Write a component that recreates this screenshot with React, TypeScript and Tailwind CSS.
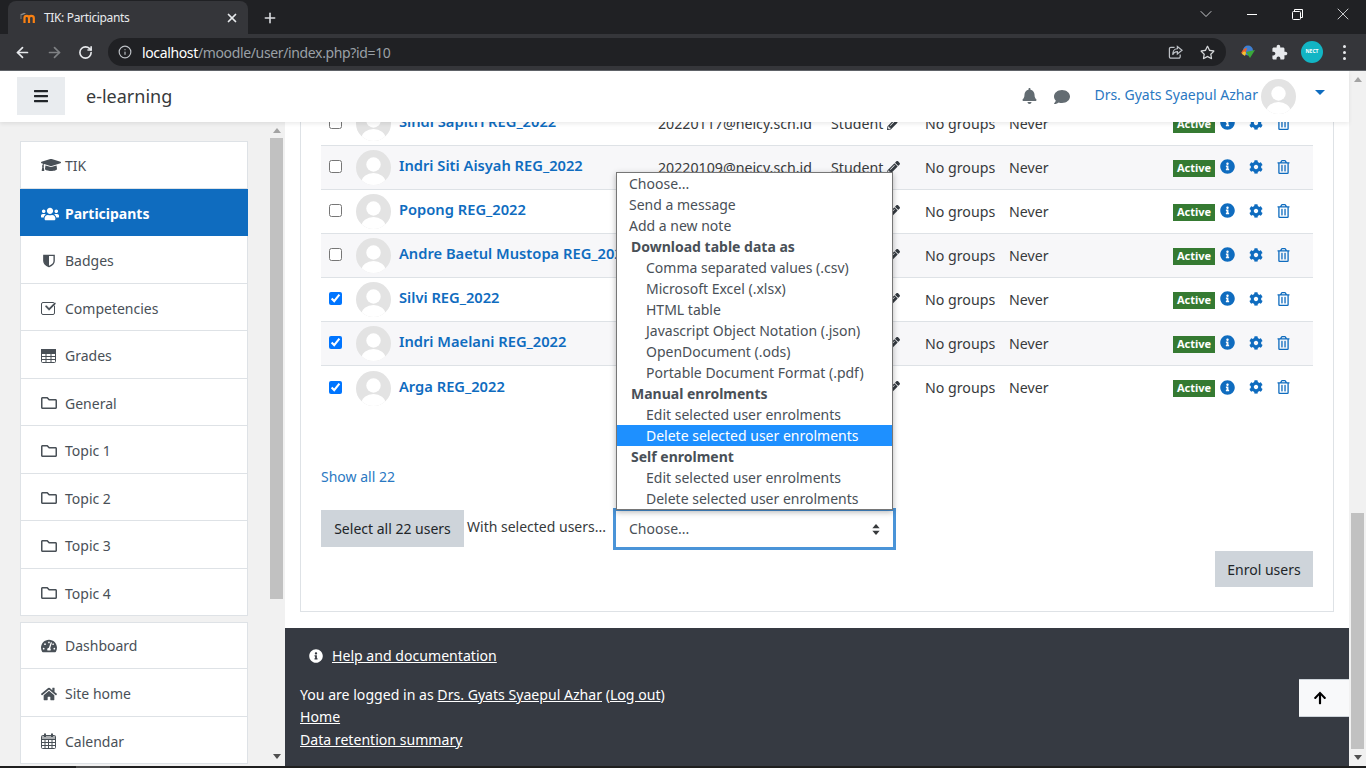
import type { ReactNode } from "react";
import {
  FaArrowUp,
  FaBars,
  FaBell,
  FaCheck,
  FaCog,
  FaComment,
  FaGraduationCap,
  FaHome,
  FaInfoCircle,
  FaPencilAlt,
  FaRegFolder,
  FaRegStar,
  FaRegTrashAlt,
  FaTachometerAlt,
  FaUsers,
} from "react-icons/fa";
import { ArrowLeft, ArrowRight, ChevronDown, Info, Plus, RotateCw, X } from "lucide-react";

const courseNav: { label: string; icon: ReactNode; active?: boolean }[] = [
  { label: "TIK", icon: <FaGraduationCap className="w-[20px] h-[20px]" /> },
  { label: "Participants", icon: <FaUsers className="w-[18px] h-[18px]" />, active: true },
  { label: "Badges", icon: <ShieldIcon /> },
  { label: "Competencies", icon: <CheckSquare /> },
  { label: "Grades", icon: <TableIcon /> },
  { label: "General", icon: <FaRegFolder className="w-[16px] h-[16px]" /> },
  { label: "Topic 1", icon: <FaRegFolder className="w-[16px] h-[16px]" /> },
  { label: "Topic 2", icon: <FaRegFolder className="w-[16px] h-[16px]" /> },
  { label: "Topic 3", icon: <FaRegFolder className="w-[16px] h-[16px]" /> },
  { label: "Topic 4", icon: <FaRegFolder className="w-[16px] h-[16px]" /> },
];

const siteNav = [
  { label: "Dashboard", icon: <FaTachometerAlt className="w-[16px] h-[16px]" /> },
  { label: "Site home", icon: <FaHome className="w-[16px] h-[16px]" /> },
  { label: "Calendar", icon: <CalendarIcon /> },
];

const users = [
  { name: "Sindi Sapitri REG_2022", email: "20220117@neicy.sch.id", checked: false },
  { name: "Indri Siti Aisyah REG_2022", email: "20220109@neicy.sch.id", checked: false },
  { name: "Popong REG_2022", email: "20220121@neicy.sch.id", checked: false },
  { name: "Andre Baetul Mustopa REG_2022", email: "20220103@neicy.sch.id", checked: false },
  { name: "Silvi REG_2022", email: "20220119@neicy.sch.id", checked: true },
  { name: "Indri Maelani REG_2022", email: "20220108@neicy.sch.id", checked: true },
  { name: "Arga REG_2022", email: "20220105@neicy.sch.id", checked: true },
];

const options: { label: string; kind: "top" | "group" | "sub"; selected?: boolean }[] = [
  { label: "Choose...", kind: "top" },
  { label: "Send a message", kind: "top" },
  { label: "Add a new note", kind: "top" },
  { label: "Download table data as", kind: "group" },
  { label: "Comma separated values (.csv)", kind: "sub" },
  { label: "Microsoft Excel (.xlsx)", kind: "sub" },
  { label: "HTML table", kind: "sub" },
  { label: "Javascript Object Notation (.json)", kind: "sub" },
  { label: "OpenDocument (.ods)", kind: "sub" },
  { label: "Portable Document Format (.pdf)", kind: "sub" },
  { label: "Manual enrolments", kind: "group" },
  { label: "Edit selected user enrolments", kind: "sub" },
  { label: "Delete selected user enrolments", kind: "sub", selected: true },
  { label: "Self enrolment", kind: "group" },
  { label: "Edit selected user enrolments", kind: "sub" },
  { label: "Delete selected user enrolments", kind: "sub" },
];

function ShieldIcon() {
  return (
    <svg viewBox="0 0 14 16" className="ml-[2px] w-[12px] h-[14px]">
      <path d="M1 1.500h12v6.500c0 3-3 5.200-6 6.500-3-1.300-6-3.500-6-6.500z" fill="none" stroke="#495057" strokeWidth="1.600" />
      <path d="M1 1.500h6v13c-3-1.300-6-3.500-6-6.500z" fill="#495057" />
    </svg>
  );
}

function TableIcon() {
  return (
    <svg viewBox="0 0 15 14" className="w-[15px] h-[14px]" fill="none" stroke="#495057">
      <rect x="0.500" y="0.500" width="14" height="13" rx="1" />
      <path d="M0.500 4.500h14M0.500 7.500h14M0.500 10.500h14M5 4.500v9M10 4.500v9" />
      <rect x="0.500" y="0.500" width="14" height="3.500" fill="#495057" />
    </svg>
  );
}

function CalendarIcon() {
  return (
    <svg viewBox="0 0 15 16" className="w-[15px] h-[16px]" fill="none" stroke="#495057">
      <rect x="0.500" y="2.500" width="14" height="13" rx="1" />
      <path d="M0.500 6.500h14M0.500 9.500h14M0.500 12.500h14M4 6.500v9M7.500 6.500v9M11 6.500v9" />
      <path d="M4 0.500v3.500M11 0.500v3.500" strokeWidth="2" />
      <rect x="0.500" y="3" width="14" height="3" fill="#495057" fillOpacity="0.45" stroke="none" />
    </svg>
  );
}

function CheckSquare() {
  return (
    <span className="relative block w-[15px] h-[14px]">
      <span className="absolute left-0 top-[1px] w-[14px] h-[13px] border-[1.5px] border-[#495057] rounded-[2px]" />
      <FaCheck className="absolute left-[3px] top-0 w-[13px] h-[11px] text-[#495057] stroke-white stroke-[25]" />
    </span>
  );
}

function Avatar({ size = 35 }: { size?: number }) {
  return (
    <svg viewBox="0 0 35 35" width={size} height={size} className="block rounded-full shrink-0">
      <rect width="35" height="35" fill="#e3e3e3" />
      <circle cx="17.500" cy="14.500" r="7.200" fill="#ffffff" />
      <ellipse cx="17.500" cy="32" rx="12" ry="9" fill="#ffffff" />
    </svg>
  );
}

function MoodleIcon() {
  return (
    <svg viewBox="0 0 16 14" className="w-[16px] h-[14px]">
      <path d="M0 3.500 4 1.800 6 2.600 2 4.300Z" fill="#8a8a8a" />
      <path d="M1 4v4" stroke="#8a8a8a" strokeWidth="0.800" />
      <path d="M4.500 12V7C4.500 5.500 5.500 4.800 6.600 4.800S9 5.500 9 7V12M9 7C9 5.500 10 4.800 11.200 4.800S13.800 5.500 13.800 7V12" fill="none" stroke="#f98012" strokeWidth="2.200" />
    </svg>
  );
}

function BrowserChrome() {
  return (
    <div className="shrink-0 h-[71px] flex flex-col text-white">
      <div className="h-[34px] bg-[#202124] flex items-end">
        <div className="relative ml-[8px] w-[240px] h-[33px] bg-[#35363a] rounded-t-[8px] flex items-center pl-[12px] pr-[9px]">
          <MoodleIcon />
          <span className="ml-[8px] flex-1 text-[12px] tracking-[-0.35px] text-[#e8eaed]">TIK: Participants</span>
          <X className="w-[14px] h-[14px] text-[#e8eaed]" strokeWidth={3} />
        </div>
        <Plus className="ml-[14px] mb-[8px] w-[16px] h-[16px] text-[#dadce0]" strokeWidth={2.4} />
        <div className="flex-1" />
        <div className="flex items-center self-start h-[28px] text-[#e8eaed]">
          <ChevronDown className="w-[20px] h-[20px] mr-[31px]" strokeWidth={1} />
          <span className="block w-[10px] h-px bg-white mr-[35px]" />
          <svg viewBox="0 0 11 11" className="w-[11px] h-[11px] mr-[30px]" fill="none" stroke="#ffffff">
            <rect x="0.500" y="2.500" width="8" height="8" rx="1" />
            <path d="M2.500 2V0.500H10.500V8.500H9" />
          </svg>
          <X className="w-[20px] h-[20px] mr-[13px]" strokeWidth={1} />
        </div>
      </div>
      <div className="h-[37px] bg-[#35363a] border-b border-[#5f6368] flex items-center">
        <ArrowLeft className="ml-[14px] w-[17px] h-[17px] text-[#e8eaed]" strokeWidth={2.4} />
        <ArrowRight className="ml-[15px] w-[17px] h-[17px] text-[#7f8184]" strokeWidth={2.4} />
        <RotateCw className="ml-[15px] w-[15px] h-[15px] text-[#e8eaed]" strokeWidth={2.6} />
        <div className="ml-[15px] w-[1118px] h-[28px] rounded-full bg-[#202124] flex items-center pl-[10px] pr-[11px]">
          <Info className="w-[14px] h-[14px] text-[#bdc1c6]" strokeWidth={2} />
          <span className="ml-[10px] flex-1 text-[14px] tracking-[-0.36px]">
            <span className="text-white">localhost</span>
            <span className="text-[#9aa0a6]">/moodle/user/index.php?id=10</span>
          </span>
          <svg viewBox="0 0 16 16" className="w-[15px] h-[15px] mr-[17px]" fill="none" stroke="#bdc1c6" strokeWidth="1.300">
            <path d="M7 2.500H3a1.500 1.500 0 0 0-1.500 1.500v8.500A1.500 1.500 0 0 0 3 14h8.500a1.500 1.500 0 0 0 1.500-1.500V10" />
            <path d="M10 1.500 15 5.500 10 9.500V7C7.500 7 6 8 5 10.500C5 7 6.500 4 10 4Z" />
          </svg>
          <FaRegStar className="w-[15px] h-[15px] text-[#d6d8da]" />
        </div>
        <svg viewBox="0 0 16 16" className="ml-[14px] w-[16px] h-[16px]">
          <circle cx="8" cy="6.500" r="5" fill="#3f7fd0" />
          <path d="M1 9C3 5 5 4 7 4L5 11Z" fill="#e8632a" />
          <path d="M2 10C3 7 5 7 6 9L5 12Z" fill="#f2c233" />
          <path d="M6 8 15 6 10 14Z" fill="#3aa83a" />
        </svg>
        <svg viewBox="0 0 24 24" className="ml-[15px] w-[17px] h-[17px]" fill="#e8eaed">
          <path d="M20.500 11H19V7c0-1.100-.9-2-2-2h-4V3.500C13 2.120 11.880 1 10.500 1S8 2.120 8 3.500V5H4c-1.100 0-1.990.9-1.990 2v3.800H3.500c1.490 0 2.700 1.210 2.700 2.700s-1.210 2.700-2.700 2.700H2V20c0 1.100.9 2 2 2h3.800v-1.500c0-1.490 1.210-2.700 2.700-2.700s2.700 1.210 2.700 2.700V22H17c1.100 0 2-.9 2-2v-4h1.500c1.380 0 2.500-1.120 2.500-2.500S21.880 11 20.500 11z" />
        </svg>
        <div className="ml-[13px] w-[22px] h-[22px] rounded-full bg-[#12b5c4] flex items-center justify-center text-[5px] font-bold text-white">NECT</div>
        <div className="ml-[20px] flex flex-col gap-[3px]">
          <span className="block w-[3px] h-[3px] rounded-full bg-[#e8eaed]" />
          <span className="block w-[3px] h-[3px] rounded-full bg-[#e8eaed]" />
          <span className="block w-[3px] h-[3px] rounded-full bg-[#e8eaed]" />
        </div>
      </div>
    </div>
  );
}

function TopNav() {
  return (
    <header className="relative z-20 shrink-0 h-[51px] bg-white shadow-[0_2px_4px_rgba(0,0,0,0.08)] flex items-center">
      <div className="ml-[17px] w-[48px] h-[38px] bg-[#e9ecef] flex items-center justify-center mb-[2px]">
        <FaBars className="w-[14px] h-[16px] text-[#212529]" />
      </div>
      <span className="ml-[21px] text-[18px] text-[#373a3c] mb-[1px]">e-learning</span>
      <div className="flex-1" />
      <FaBell className="w-[15px] h-[16px] text-[#636c72] mb-[1px]" />
      <FaComment className="ml-[17px] w-[16px] h-[16px] text-[#636c72]" />
      <span className="ml-[24px] text-[14px] text-[#2a78c2] mb-[5px]">Drs. Gyats Syaepul Azhar</span>
      <div className="ml-[3px] mb-[1px]">
        <Avatar />
      </div>
      <span className="ml-[19px] mr-[24px] mb-[9px] w-0 h-0 border-x-[5px] border-x-transparent border-t-[5px] border-t-[#0f6cbf]" />
    </header>
  );
}

function NavCard({ items }: { items: { label: string; icon: ReactNode; active?: boolean }[] }) {
  return (
    <div className="ml-[20px] w-[228px] shrink-0 bg-white">
      {items.map((item, i) => (
        <div
          key={item.label}
          className={
            (item.active
              ? "bg-[#0f6cbf] text-white font-bold pl-[21px] "
              : "border-x border-b border-[#dee2e6] text-[#495057] pl-[20px] ") +
            (i === 0 ? "border-t " : "pt-[2px] ") +
            "h-[47.5px] flex items-center text-[14px]"
          }
        >
          <span className="w-[24px] flex items-center">{item.icon}</span>
          {item.label}
        </div>
      ))}
    </div>
  );
}

function ScrollArrow({ up }: { up?: boolean }) {
  return (
    <span
      className={
        up
          ? "w-0 h-0 border-x-[4px] border-x-transparent border-b-[5px] border-b-[#a3a3a3]"
          : "w-0 h-0 border-x-[4px] border-x-transparent border-t-[5px] border-t-[#505050]"
      }
    />
  );
}

function Sidebar() {
  return (
    <aside className="w-[285px] shrink-0 h-full bg-[#f1f1f1] flex overflow-hidden">
      <div className="w-[270px] shrink-0 pt-[19.3px] flex flex-col gap-[5.5px]">
        <NavCard items={courseNav} />
        <NavCard items={siteNav} />
        <div className="ml-[20px] w-[228px] h-[10px] bg-white border-t border-[#dee2e6]" />
      </div>
      <div className="w-[13px] flex flex-col items-center">
        <div className="h-[16px] flex items-center justify-center w-full">
          <ScrollArrow up />
        </div>
        <div className="w-[13px] h-[461px] bg-[#c1c1c1]" />
        <div className="flex-1 flex items-end pb-[7px]">
          <ScrollArrow />
        </div>
      </div>
    </aside>
  );
}

function UserRow({ user, shaded, last }: { user: (typeof users)[number]; shaded: boolean; last: boolean }) {
  return (
    <div
      className={
        "h-[44px] grid grid-cols-[35px_43px_259px_173px_94px_84px_164px_1fr] items-center text-[14.2px] text-[#373a3c] whitespace-nowrap " +
        (last ? "" : "border-b border-[#dee2e6] ") +
        (shaded ? "bg-[#f7f7f9]" : "bg-white")
      }
    >
      <div className="pl-[8px] mb-[2px] flex items-center">
        <input type="checkbox" checked={user.checked} readOnly className="w-[13px] h-[13px] m-0 accent-[#0075ff]" />
      </div>
      <Avatar />
      <span className="font-semibold text-[#0f6cbf] mb-[4px] text-[14.7px]">{user.name}</span>
      <span>{user.email}</span>
      <span className="flex items-center">
        Student
        <FaPencilAlt className="ml-[4px] w-[13px] h-[13px] text-[#343a40]" />
      </span>
      <span>No groups</span>
      <span>Never</span>
      <div className="flex items-center">
        <span className="mt-[1px] w-[42px] h-[17px] bg-[#357a32] text-white text-[11px] font-bold flex items-center justify-center">Active</span>
        <FaInfoCircle className="ml-[5px] mb-[2px] w-[15px] h-[15px] text-[#0f6cbf]" />
        <FaCog className="ml-[14px] mb-[2px] w-[14px] h-[14px] text-[#0f6cbf]" />
        <FaRegTrashAlt className="ml-[14px] mb-[2px] w-[13px] h-[14px] text-[#0f6cbf]" />
      </div>
    </div>
  );
}

function SelectMenu() {
  return (
    <div className="relative w-[283px] h-[42px] bg-white border-[3px] border-[#4a94d8] flex items-center pl-[13px] pr-[13px] text-[14px] text-[#495057]">
      <span className="flex-1 mb-[2px]">Choose...</span>
      <svg viewBox="0 0 8 12" className="w-[8px] h-[11px]" fill="#373a3c">
        <path d="M4 0 8 4.600H0Z" />
        <path d="M4 12 8 7.400H0Z" />
      </svg>
      <ul className="absolute left-0 bottom-[37px] w-[277px] h-[338px] bg-white border border-[#767676] shadow-[0_2px_6px_rgba(0,0,0,0.3)] z-10 text-[14px] text-[#495057] whitespace-nowrap">
        {options.map((o, i) => (
          <li
            key={i}
            className={
              "h-[21px] leading-[21px] " +
              (o.kind === "top" ? "pl-[12px] " : o.kind === "group" ? "pl-[14px] font-bold " : "pl-[29px] ") +
              (o.selected ? "bg-[#1e90ff] text-white" : "")
            }
          >
            {o.label}
          </li>
        ))}
      </ul>
    </div>
  );
}

function Footer() {
  return (
    <footer className="relative flex-1 bg-[#363a42] text-white text-[14.1px] pl-[15px] pt-[17px]">
      <div className="flex items-center h-[21px] pl-[9px]">
        <FaInfoCircle className="w-[14px] h-[14px]" />
        <a className="ml-[9px] underline">Help and documentation</a>
      </div>
      <p className="mt-[18px] leading-[22px]">
        You are logged in as <a className="underline">Drs. Gyats Syaepul Azhar</a> (<a className="underline">Log out</a>)
      </p>
      <p className="leading-[22px]">
        <a className="underline">Home</a>
      </p>
      <p className="mt-px leading-[22px]">
        <a className="underline">Data retention summary</a>
      </p>
      <div className="absolute right-0 top-[51px] w-[50px] h-[38px] bg-[#f8f9fa] border-y border-[#ced4da] flex items-center justify-center pr-[8px]">
        <FaArrowUp className="w-[14px] h-[14px] text-black" />
      </div>
    </footer>
  );
}

function MainContent() {
  return (
    <main className="flex-1 h-full flex flex-col overflow-hidden bg-white">
      <div className="mx-[15px] -mt-[39px] shrink-0 pt-[19px] border-x border-b border-[#dee2e6] px-[20px] pb-[24px] mb-[16px]">
        {users.map((u, i) => (
          <UserRow key={u.name} user={u} shaded={i % 2 === 1} last={i === users.length - 1} />
        ))}
        <div className="mt-[54px] h-[24px] flex items-center text-[14px] text-[#2a78c2]">Show all 22</div>
        <div className="mt-[20px] h-[42px] flex text-[14px] text-[#373a3c]">
          <div className="mt-[2px] w-[143px] h-[37px] bg-[#ced4da] flex items-center justify-center text-[#212529]">Select all 22 users</div>
          <span className="ml-[3px] mt-[8px] w-[146px]">With selected users...</span>
          <SelectMenu />
        </div>
        <div className="mt-[1px] flex justify-end">
          <div className="w-[98px] h-[36px] bg-[#ced4da] flex items-center justify-center text-[14px] text-[#212529]">Enrol users</div>
        </div>
      </div>
      <Footer />
    </main>
  );
}

export default function App() {
  return (
    <div className="w-[1366px] h-[768px] overflow-hidden flex flex-col bg-white font-['Noto_Sans',sans-serif]">
      <BrowserChrome />
      <div className="flex-1 min-h-0 flex">
        <div className="w-[1349px] shrink-0 h-full flex flex-col">
          <TopNav />
          <div className="flex-1 min-h-0 flex">
            <Sidebar />
            <MainContent />
          </div>
        </div>
        <div className="w-[17px] h-full bg-[#f1f1f1] flex flex-col items-center">
          <div className="h-[17px] flex items-center justify-center w-full">
            <ScrollArrow up />
          </div>
          <div className="mt-[425px] w-[13px] h-[236px] bg-[#c1c1c1]" />
          <div className="flex-1 flex items-center">
            <ScrollArrow />
          </div>
        </div>
      </div>
      <div className="h-[2px] shrink-0 bg-[#1f1f1f] flex">
        <span className="ml-[76px] w-[34px] bg-[#4d4d4d]" />
      </div>
    </div>
  );
}
